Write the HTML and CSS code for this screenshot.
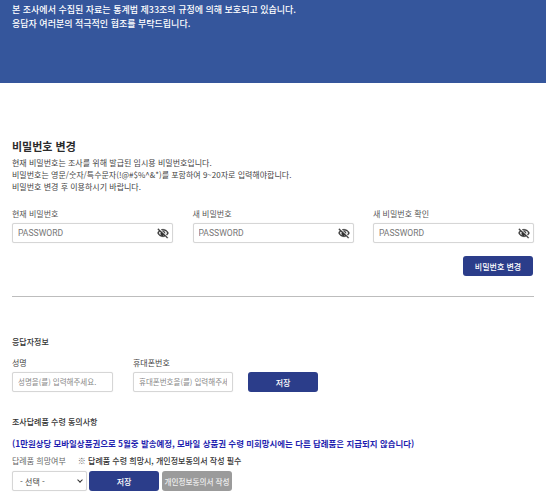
FILE: index.html
```html
<!DOCTYPE html>
<html lang="ko">
<head>
<meta charset="utf-8">
<title>비밀번호 변경</title>
<link rel="stylesheet" href="styles.css">
</head>
<body>
<header class="banner">
  <p>본 조사에서 수집된 자료는 통계법 제33조의 규정에 의해 보호되고 있습니다.</p>
  <p>응답자 여러분의 적극적인 협조를 부탁드립니다.</p>
</header>
<main class="content">
  <section class="pw">
    <h2>비밀번호 변경</h2>
    <div class="desc">
      <p>현재 비밀번호는 조사를 위해 발급된 임시용 비밀번호입니다.</p>
      <p>비밀번호는 영문/숫자/특수문자(!@#$%^&amp;*)를 포함하여 9~20자로 입력해야합니다.</p>
      <p>비밀번호 변경 후 이용하시기 바랍니다.</p>
    </div>
    <div class="pw-grid">
      <label class="field"><span class="lab">현재 비밀번호</span>
        <span class="input-wrap"><input type="text" placeholder="PASSWORD">
          <svg class="eye" viewBox="0 0 24 24"><path d="M12 6.500c3.800 0 7.200 2.100 8.800 5.500a10 10 0 0 1-2.400 3.200l1.400 1.400a12 12 0 0 0 3.200-4.600C21.300 7.600 17 4.500 12 4.500c-1.300 0-2.500.2-3.600.6L10 6.700c.6-.1 1.300-.2 2-.2zM2.700 3.300 1.300 4.700l2.700 2.700A11.800 11.800 0 0 0 1 12c1.700 4.400 6 7.500 11 7.500 1.500 0 3-.3 4.400-.8l3.900 3.900 1.400-1.400zM12 17.500c-3.800 0-7.200-2.100-8.800-5.500a10 10 0 0 1 2.300-3.100l2.300 2.300a4 4 0 0 0 5.500 5.500l1.100 1.100c-.7.1-1.500.2-2.400.2zM11 8.100l4.900 4.900a4 4 0 0 0-4.900-4.900z"/></svg>
        </span></label>
      <label class="field"><span class="lab">새 비밀번호</span>
        <span class="input-wrap"><input type="text" placeholder="PASSWORD">
          <svg class="eye" viewBox="0 0 24 24"><path d="M12 6.500c3.800 0 7.200 2.100 8.800 5.500a10 10 0 0 1-2.400 3.200l1.400 1.400a12 12 0 0 0 3.200-4.600C21.300 7.600 17 4.500 12 4.500c-1.300 0-2.500.2-3.600.6L10 6.700c.6-.1 1.300-.2 2-.2zM2.700 3.300 1.300 4.700l2.700 2.700A11.800 11.800 0 0 0 1 12c1.700 4.400 6 7.500 11 7.500 1.500 0 3-.3 4.400-.8l3.900 3.900 1.400-1.400zM12 17.500c-3.800 0-7.200-2.100-8.800-5.500a10 10 0 0 1 2.300-3.100l2.300 2.300a4 4 0 0 0 5.500 5.500l1.100 1.100c-.7.1-1.500.2-2.400.2zM11 8.100l4.900 4.900a4 4 0 0 0-4.900-4.900z"/></svg>
        </span></label>
      <label class="field"><span class="lab">새 비밀번호 확인</span>
        <span class="input-wrap"><input type="text" placeholder="PASSWORD">
          <svg class="eye" viewBox="0 0 24 24"><path d="M12 6.500c3.800 0 7.200 2.100 8.800 5.500a10 10 0 0 1-2.400 3.200l1.400 1.400a12 12 0 0 0 3.200-4.600C21.300 7.600 17 4.500 12 4.500c-1.300 0-2.500.2-3.600.6L10 6.700c.6-.1 1.300-.2 2-.2zM2.700 3.300 1.300 4.700l2.700 2.700A11.800 11.800 0 0 0 1 12c1.700 4.400 6 7.500 11 7.500 1.500 0 3-.3 4.400-.8l3.900 3.900 1.400-1.400zM12 17.500c-3.800 0-7.200-2.100-8.800-5.500a10 10 0 0 1 2.300-3.100l2.300 2.300a4 4 0 0 0 5.500 5.500l1.100 1.100c-.7.1-1.500.2-2.400.2zM11 8.100l4.900 4.900a4 4 0 0 0-4.900-4.900z"/></svg>
        </span></label>
    </div>
    <div class="pw-action"><button class="btn btn-wide" type="button">비밀번호 변경</button></div>
  </section>
  <hr class="rule">
  <section class="resp">
    <h3>응답자정보</h3>
    <div class="resp-row">
      <label class="field name"><span class="lab dark">성명</span><input class="plain" type="text" placeholder="성명을(를) 입력해주세요."></label>
      <label class="field phone"><span class="lab dark">휴대폰번호</span><input class="plain" type="text" placeholder="휴대폰번호을(를) 입력해주세요."></label>
      <button class="btn btn-wide" type="button">저장</button>
    </div>
  </section>
  <section class="gift">
    <h3>조사답례품 수령 동의사항</h3>
    <p class="notice">(1만원상당 모바일상품권으로 5월중 발송예정, 모바일 상품권 수령 미회망시에는 다른 답례품은 지급되지 않습니다)</p>
    <p class="gift-label"><span>답례품 희망여부</span><span class="req">※ <b>답례품 수령 희망시, 개인정보동의서 작성 필수</b></span></p>
    <div class="gift-row">
      <span class="sel-wrap"><select class="sel"><option>- 선택 -</option></select></span>
      <button class="btn btn-wide" type="button">저장</button>
      <button class="btn btn-gray" type="button">개인정보동의서 작성</button>
    </div>
  </section>
</main>
</body>
</html>
```
FILE: styles.css
```css
* { box-sizing: border-box; }
html, body { margin: 0; padding: 0; }
body {
  width: 546px;
  height: 495px;
  overflow: hidden;
  background: #fff;
  font-family: "Noto Sans CJK KR", "Noto Sans", sans-serif;
  color: #333;
}
p, h2, h3 { margin: 0; }
.banner {
  height: 83px;
  background: #35569c;
  color: #fff;
  padding: 3px 12px 0;
  font-size: 9px;
  font-weight: 500;
  line-height: 14px;
}
.content { padding: 0 12px; }
.pw { padding-top: 54px; }
h2 {
  font-size: 11px;
  font-weight: 700;
  line-height: 18px;
  color: #2b2b2b;
}
.desc {
  margin-top: 2px;
  font-size: 8px;
  line-height: 12px;
  color: #444;
}
.pw-grid {
  margin-top: 15px;
  display: grid;
  grid-template-columns: repeat(3, 161px);
  justify-content: space-between;
}
.field { display: flex; flex-direction: column; }
.lab {
  font-size: 8px;
  line-height: 12px;
  margin-bottom: 3px;
  color: #555;
}
.lab.dark { color: #444; }
.input-wrap {
  position: relative;
  display: block;
}
input {
  display: block;
  width: 100%;
  height: 20px;
  border: 1px solid #d6d6d6;
  border-radius: 2px;
  background: #fff;
  box-shadow: 0 0 1px #ddd;
  padding: 0 5px;
  font-family: Roboto, "Noto Sans CJK KR", sans-serif;
  font-size: 8.6px;
  color: #333;
  outline: none;
}
input::placeholder { color: #777; opacity: 1; }
.input-wrap input { padding-right: 24px; }
.eye {
  position: absolute;
  right: 4px;
  top: 4px;
  width: 12px;
  height: 12px;
  fill: #333;
  stroke: #333;
  stroke-width: 0.8;
}
.pw-action {
  margin-top: 13px;
  display: flex;
  justify-content: flex-end;
  padding-right: 1px;
}
.btn {
  height: 20px;
  border: 0;
  border-radius: 3px;
  padding: 0;
  font-family: "Noto Sans CJK KR", sans-serif;
  font-size: 8px;
  font-weight: 500;
  color: #fff;
  background: #2b3d8a;
}
.btn-wide { width: 70px; }
.btn-gray {
  width: 70px;
  background: #9b9b9b;
  color: #eee;
  font-size: 7.6px;
  white-space: nowrap;
}
.rule {
  margin: 20px 0 0;
  border: 0;
  border-top: 1px solid #bdbdbd;
  height: 1px;
}
.resp { padding-top: 39px; }
h3 {
  font-size: 8px;
  font-weight: 500;
  line-height: 12px;
  color: #333;
}
.resp-row {
  margin-top: 9px;
  display: flex;
  align-items: flex-end;
}
.name { width: 101px; margin-right: 20px; }
.phone { width: 100px; margin-right: 15px; }
.plain { color: #888; }
.plain::placeholder { font-family: "Noto Sans CJK KR", sans-serif; font-size: 7.5px; color: #888; }
.gift { padding-top: 24px; }
.notice {
  margin-top: 9px;
  font-size: 8.45px;
  font-weight: 700;
  line-height: 13px;
  color: #1f1fb0;
  white-space: nowrap;
}
.gift-label {
  margin-top: 5px;
  display: flex;
  font-size: 8px;
  line-height: 12px;
  color: #666;
}
.req { margin-left: 12px; }
.req b { font-weight: 500; color: #333; }
.gift-row {
  margin-top: 4px;
  display: flex;
  gap: 2px;
}
.sel-wrap {
  position: relative;
  display: block;
  width: 75px;
  height: 20px;
}
.sel-wrap::after {
  content: "";
  position: absolute;
  right: 5px;
  top: 7px;
  width: 3px;
  height: 3px;
  border-right: 1px solid #333;
  border-bottom: 1px solid #333;
  transform: rotate(45deg);
  pointer-events: none;
}
.sel {
  display: block;
  width: 100%;
  height: 20px;
  appearance: none;
  border: 1px solid #d6d6d6;
  border-radius: 2px;
  background: #fff;
  box-shadow: 0 0 1px #ddd;
  padding: 0 7px;
  font-family: "Noto Sans CJK KR", sans-serif;
  font-size: 8px;
  color: #444;
}
.gift-row .btn-gray { margin-left: 1px; }
```
